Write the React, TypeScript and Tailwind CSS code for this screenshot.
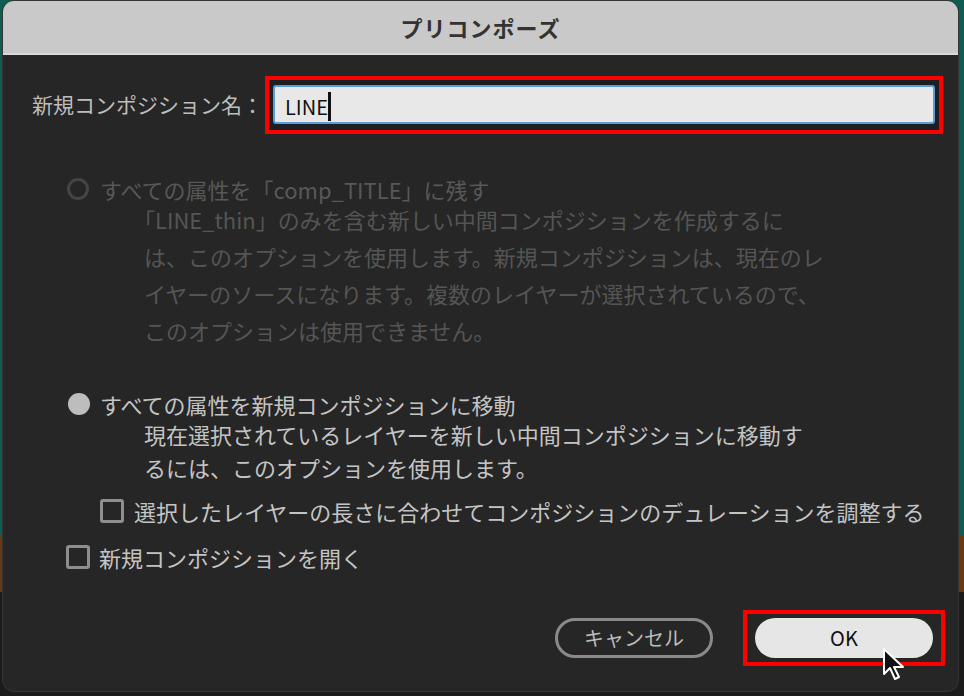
import React from 'react';

const jp = { fontFamily: '"Noto Sans CJK JP", "Noto Sans", sans-serif' };

function Radio({ filled, disabled }: { filled?: boolean; disabled?: boolean }) {
  if (filled) return <span className="w-[22px] h-[22px] rounded-full bg-[#bdbdbd] shrink-0" />;
  return (
    <span
      className={`w-[22px] h-[22px] rounded-full border-[3px] shrink-0 ${disabled ? 'border-[#454545]' : 'border-[#9a9a9a]'}`}
    />
  );
}

function Checkbox() {
  return <span className="w-[24px] h-[24px] rounded-[3px] border-[3px] border-[#8e8e8e] shrink-0" />;
}

export default function App() {
  return (
    <div
      className="w-[964px] h-[696px] pl-[2px] pr-[5px] pb-[4px] bg-[linear-gradient(to_bottom,#0f5c52_0%,#0f5c52_77%,#6a3912_77%,#6a3912_85%,#1b1b1b_85%)] relative"
      style={jp}
    >
      <div className="h-full rounded-[12px] overflow-hidden bg-[#262626] border border-[#353535] flex flex-col">
        {/* title bar */}
        <div className="h-[54px] shrink-0 bg-[#c9c9c9] border-b-2 border-[#d9d9d9] flex items-center justify-center">
          <span className="text-[22px] font-bold text-[#333333] tracking-[1px]">プリコンポーズ</span>
        </div>

        <div className="flex-1 flex flex-col pt-[21px] pr-[15px]">
          {/* name row */}
          <div className="flex items-center">
            <span className="pl-[29px] w-[262px] text-[21px] text-[#bdbdbd] whitespace-nowrap">新規コンポジション名：</span>
            <div className="flex-1 border-4 border-[#ff0000] bg-[#1c2023] px-[4px] pt-[5px] pb-[6px]">
              <div className="h-[39px] rounded-[3px] bg-[#e8e8e8] border-2 border-[#5c9ad8] flex items-center pl-[10px] pt-[4px]">
                <span className="text-[20px] text-[#111111] leading-none">LINE</span>
                <span className="w-[3px] h-[29px] bg-[#111111]" />
              </div>
            </div>
          </div>

          {/* disabled option */}
          <div className="mt-[43px] flex items-center h-[24px] pl-[64px] gap-[11px]">
            <Radio disabled />
            <span className="text-[22px] leading-[24px] text-[#585858] whitespace-nowrap">すべての属性を「comp_TITLE」に残す</span>
          </div>
          <div className="pl-[141px] text-[22px] leading-[37px] text-[#555555] whitespace-nowrap">
            <div className="-ml-[11px]">「LINE_thin」のみを含む新しい中間コンポジションを作成するに</div>
            <div>は、このオプションを使用します。新規コンポジションは、現在のレ</div>
            <div>イヤーのソースになります。複数のレイヤーが選択されているので、</div>
            <div>このオプションは使用できません。</div>
          </div>

          {/* enabled option */}
          <div className="mt-[43px] flex items-center h-[24px] pl-[65px] gap-[10px]">
            <Radio filled />
            <span className="text-[22px] leading-[24px] text-[#c4c4c4] whitespace-nowrap">すべての属性を新規コンポジションに移動</span>
          </div>
          <div className="mt-[2px] pl-[141px] text-[22px] leading-[33px] text-[#c4c4c4] whitespace-nowrap">
            <div>現在選択されているレイヤーを新しい中間コンポジションに移動す</div>
            <div>るには、このオプションを使用します。</div>
          </div>

          <div className="mt-[13px] flex items-center h-[28px] pl-[97px] gap-[10px]">
            <Checkbox />
            <span className="text-[22px] text-[#c4c4c4] whitespace-nowrap">選択したレイヤーの長さに合わせてコンポジションのデュレーションを調整する</span>
          </div>

          <div className="mt-[18px] flex items-center h-[28px] pl-[63px] gap-[9px]">
            <Checkbox />
            <span className="text-[22px] text-[#c4c4c4] whitespace-nowrap">新規コンポジションを開く</span>
          </div>

          {/* buttons */}
          <div className="mt-[39px] flex items-center justify-end gap-[30px]">
            <button className="w-[158px] h-[40px] rounded-full border-[3px] border-[#8a8a8a] text-[20px] text-[#bcbcbc] flex items-center justify-center">
              キャンセル
            </button>
            <div className="border-4 border-[#ff0000] px-[8px] py-[4px] mr-[-2px]">
              <button className="w-[178px] h-[40px] rounded-full bg-[#e6e6e6] text-[20px] text-[#111111] flex items-center justify-center">
                OK
              </button>
            </div>
          </div>
        </div>
      </div>

      {/* mouse cursor */}
      <svg className="absolute left-[882px] top-[647px]" width="26" height="36" viewBox="0 0 26 36">
        <path
          d="M2 2 L2 27 L8 21 L13 32 L17 30 L12 20 L21 20 Z"
          fill="#111111"
          stroke="#ffffff"
          strokeWidth="2"
          strokeLinejoin="round"
        />
      </svg>
    </div>
  );
}
